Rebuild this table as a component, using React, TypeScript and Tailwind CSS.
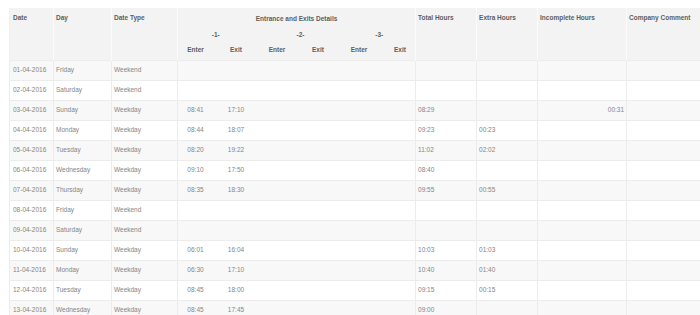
import React from "react";

type Row = {
  date: string;
  day: string;
  type: string;
  times: string[];
  total?: string;
  extra?: string;
  incomplete?: string;
};

const rows: Row[] = [
  { date: "01-04-2016", day: "Friday", type: "Weekend", times: [] },
  { date: "02-04-2016", day: "Saturday", type: "Weekend", times: [] },
  { date: "03-04-2016", day: "Sunday", type: "Weekday", times: ["08:41", "17:10"], total: "08:29", incomplete: "00:31" },
  { date: "04-04-2016", day: "Monday", type: "Weekday", times: ["08:44", "18:07"], total: "09:23", extra: "00:23" },
  { date: "05-04-2016", day: "Tuesday", type: "Weekday", times: ["08:20", "19:22"], total: "11:02", extra: "02:02" },
  { date: "06-04-2016", day: "Wednesday", type: "Weekday", times: ["09:10", "17:50"], total: "08:40" },
  { date: "07-04-2016", day: "Thursday", type: "Weekday", times: ["08:35", "18:30"], total: "09:55", extra: "00:55" },
  { date: "08-04-2016", day: "Friday", type: "Weekend", times: [] },
  { date: "09-04-2016", day: "Saturday", type: "Weekend", times: [] },
  { date: "10-04-2016", day: "Sunday", type: "Weekday", times: ["06:01", "16:04"], total: "10:03", extra: "01:03" },
  { date: "11-04-2016", day: "Monday", type: "Weekday", times: ["06:30", "17:10"], total: "10:40", extra: "01:40" },
  { date: "12-04-2016", day: "Tuesday", type: "Weekday", times: ["08:45", "18:00"], total: "09:15", extra: "00:15" },
  { date: "13-04-2016", day: "Wednesday", type: "Weekday", times: ["08:45", "17:45"], total: "09:00" },
];

const hcell = "border-x border-[#fbfbfb] align-top pt-[6px] px-[2px] text-left font-bold";

export default function App() {
  return (
    <div className="w-[700px] h-[315px] overflow-hidden bg-white pt-[8px] pl-[9px] font-['Liberation_Sans',Arial,sans-serif] text-[6.5px] leading-[8px]">
      <table className="border-collapse table-fixed w-[789px]">
        <colgroup>
          <col className="w-[44px]" />
          <col className="w-[58px]" />
          <col className="w-[66px]" />
          <col className="w-[41px]" />
          <col className="w-[41px]" />
          <col className="w-[41px]" />
          <col className="w-[41px]" />
          <col className="w-[41px]" />
          <col className="w-[33px]" />
          <col className="w-[61px]" />
          <col className="w-[61px]" />
          <col className="w-[89px]" />
          <col className="w-[172px]" />
        </colgroup>
        <thead className="bg-[#f3f3f3] text-[#5e5e5e]">
          <tr className="h-[18px]">
            <th rowSpan={3} className={hcell + " border-l-[#f0f0f0] pl-[3px]"}>Date</th>
            <th rowSpan={3} className={hcell}>Day</th>
            <th rowSpan={3} className={hcell}>Date Type</th>
            <th colSpan={6} className="border-x border-[#fbfbfb] font-bold text-center align-middle pt-[4px]">
              Entrance and Exits Details
            </th>
            <th rowSpan={3} className={hcell}>Total Hours</th>
            <th rowSpan={3} className={hcell}>Extra Hours</th>
            <th rowSpan={3} className={hcell}>Incomplete Hours</th>
            <th rowSpan={3} className={hcell}>Company Comment</th>
          </tr>
          <tr className="h-[16px]">
            <th colSpan={2} className="font-bold text-center pr-[6px] pt-[1px]">-1-</th>
            <th colSpan={2} className="font-bold text-center pt-[1px]">-2-</th>
            <th colSpan={2} className="font-bold text-center pl-[2px] pt-[1px]">-3-</th>
          </tr>
          <tr className="h-[18px]">
            {["Enter", "Exit", "Enter", "Exit", "Enter", "Exit"].map((t, i) => (
              <th key={i} className="font-bold text-left pl-[9px] pb-[1px]">
                <span className="inline-block w-[17px] text-center">{t}</span>
              </th>
            ))}
          </tr>
        </thead>
        <tbody className="text-[#858585]">
          {rows.map((r, idx) => (
            <tr
              key={r.date}
              className={
                "h-[20px] border-t border-[#ececec] " + (idx % 2 === 0 ? "bg-[#f8f8f8]" : "bg-white")
              }
            >
              <td className="border-x border-[#ececec] pl-[3px]">{r.date}</td>
              <td className="border-x border-[#ececec] px-[2px]">{r.day}</td>
              <td className="border-x border-[#ececec] px-[2px]">{r.type}</td>
              {[0, 1, 2, 3, 4, 5].map((i) => (
                <td
                  key={i}
                  className={
                    "pl-[9px] " +
                    (i === 0 ? "border-l border-[#ececec]" : i === 5 ? "border-r border-[#ececec]" : "")
                  }
                >
                  {r.times[i] ? (
                    <span className="inline-block w-[17px] text-center">{r.times[i]}</span>
                  ) : null}
                </td>
              ))}
              <td className="border-x border-[#ececec] px-[2px]">{r.total ?? ""}</td>
              <td className="border-x border-[#ececec] px-[2px]">{r.extra ?? ""}</td>
              <td className="border-x border-[#ececec] px-[2px] text-right">{r.incomplete ?? ""}</td>
              <td className="border-x border-[#ececec] px-[3px]"></td>
            </tr>
          ))}
        </tbody>
      </table>
    </div>
  );
}
